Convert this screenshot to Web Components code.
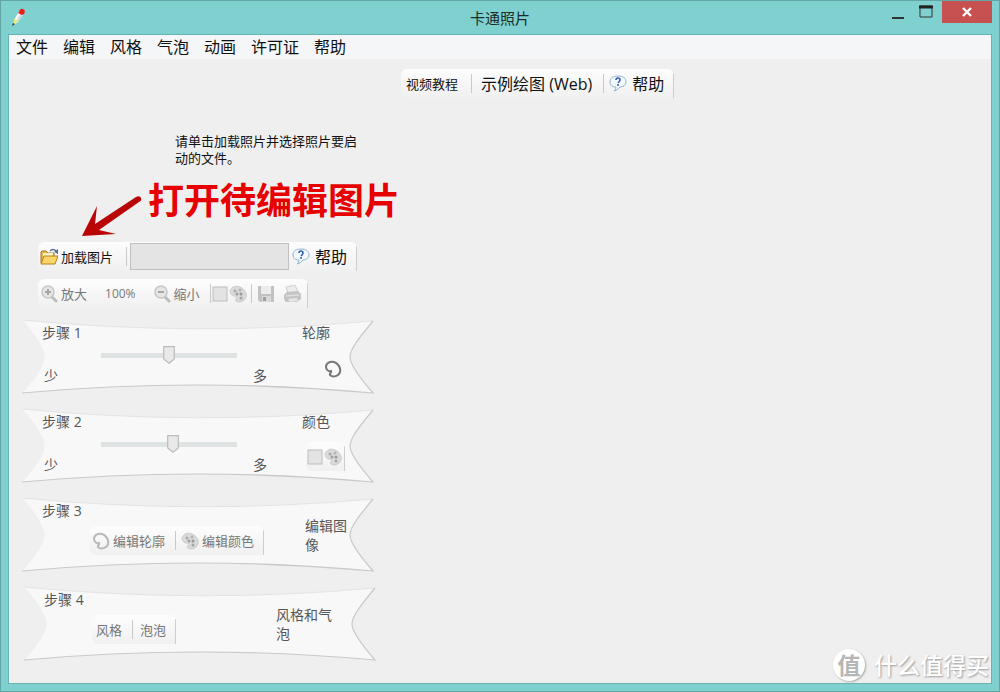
<!DOCTYPE html>
<html lang="zh-CN">
<head>
<meta charset="utf-8">
<title>卡通照片</title>
<style>
html, body { margin: 0; height: 100%; }
body { font-family: "Open Sans", "Noto Sans CJK SC", sans-serif; font-size: 14px; line-height: 18px; color: #111; background: #7fd1d0; }
</style>
</head>
<body>
<app-window></app-window>
<script>
function define(name, html, setup) {
  const template = document.createElement('template');
  template.innerHTML = html;
  customElements.define(name, class extends HTMLElement {
    constructor() {
      super();
      this.attachShadow({ mode: 'open' }).append(template.content.cloneNode(true));
    }
    connectedCallback() {
      if (setup && !this.ready) { this.ready = true; setup(this, this.shadowRoot); }
    }
  });
}

const icons = {
  pencil: '<path d="M2 17 L3 12 L9 2 L13 5 L7 14Z" fill="#f7f7f5"/><path d="M11 2 L13 5 L7 14 L5 14Z" fill="#d4d8dc"/><path d="M8 4 Q9 0 12 1 Q15 2 13 6 L11 7 L7 5Z" fill="#ee1c1c"/><path d="M3 11 L7 13 L3 16Z" fill="#e3ee6a"/><path d="M1 18 L2 15 L4 16Z" fill="#333"/>',
  help: '<path d="M9 1 C4 1 1 3 1 7 C1 10 3 12 7 12 Q7 15 5 16 Q9 15 11 12 C14 12 17 10 17 7 C17 3 14 1 9 1Z" fill="#f3f9fe" stroke="#8db2ca"/><path d="M7 5 Q7 3 9 3 Q11 3 11 5 Q11 6 9 8" fill="none" stroke="#315eae" stroke-width="1.6"/><circle cx="9" cy="10" r="1" fill="#315eae"/>',
  folder: '<path d="M1 15 L1 4 L2 3 L6 3 L8 5 L14 5 L14 15Z" fill="#e9b64a" stroke="#a9751d"/><path d="M3 5 L13 5 L13 8 L3 8Z" fill="#fff3c9"/><path d="M1 16 L4 8 L18 8 L15 16Z" fill="#fbd568" stroke="#b5801f"/><path d="M10 3 Q13 0 16 3" fill="none" stroke="#54708e" stroke-width="1.5"/><path d="M14 4 L18 1 L18 6Z" fill="#54708e"/>',
  zoomin: '<path d="M12 12 L16 16" stroke="#bcbcbc" stroke-width="3" stroke-linecap="round"/><circle cx="8" cy="7" r="6" fill="#e6e6e6" stroke="#c6c6c6" stroke-width="1.5"/><path d="M5 7H11M8 4V10" stroke="#a6a6a6" stroke-width="2"/>',
  zoomout: '<path d="M12 12 L16 16" stroke="#bcbcbc" stroke-width="3" stroke-linecap="round"/><circle cx="8" cy="7" r="6" fill="#e6e6e6" stroke="#c6c6c6" stroke-width="1.5"/><path d="M5 7H11" stroke="#a6a6a6" stroke-width="2"/>',
  swatch: '<rect x="2" y="2" width="14" height="14" fill="#e3e3e3" stroke="#bdbdbd"/>',
  palette: '<path d="M7 11 C4 12 1 9 1 6 C2 2 7 0 11 2 C16 4 18 9 17 12 C15 17 10 18 7 16 C5 14 9 13 7 11Z" fill="#dadada" stroke="#cacaca"/><circle cx="6" cy="6" r="1.5" fill="#aaa"/><circle cx="11" cy="5" r="1.5" fill="#b4b4b4"/><circle cx="8" cy="9" r="1.5" fill="#a0a0a0"/><circle cx="12" cy="9" r="1.5" fill="#999"/><circle cx="12" cy="13" r="1.5" fill="#a5a5a5"/>',
  save: '<path d="M1 1H17V17H3L1 15Z" fill="#c2c2c2"/><rect x="4" y="1" width="10" height="8" fill="#ececec"/><rect x="5" y="11" width="9" height="6" fill="#d9d9d9"/><rect x="6" y="12" width="3" height="4" fill="#a0a0a0"/>',
  print: '<path d="M5 8 L3 2 L12 0 L15 7Z" fill="#ececec" stroke="#cecece"/><path d="M1 10 L4 7 L15 6 L18 9 L18 14 L14 17 L3 17 L1 14Z" fill="#c4c4c4"/><path d="M3 11 L16 10" stroke="#dedede" stroke-width="1.5"/><path d="M5 14 L14 13 L15 16 L7 17Z" fill="#e6e6e6"/>',
  outline: '<path d="M7 11 C4 12 2 9 2 7 C2 3 6 1 10 2 C14 3 17 8 16 12 C15 16 9 18 6 15 C5 13 8 13 7 11Z" fill="none" stroke="currentColor" stroke-width="2"/>',
  minimize: '<path d="M3 15H15" stroke="#333" stroke-width="2"/>',
  maximize: '<path d="M3 3H15V14H3Z" fill="none" stroke="#333"/><path d="M2 4H16" stroke="#222" stroke-width="3"/>',
  close: '<path d="M5 5L13 13M13 5L5 13" stroke="#fff" stroke-width="2.4"/>'
};

define('app-icon', `
<style>
:host { display: block; flex: none; width: 18px; height: 18px; }
svg { display: block; width: 100%; height: 100%; }
</style>
<svg viewBox="0 0 18 18" aria-hidden="true"></svg>`, (host, root) => {
  root.querySelector('svg').innerHTML = icons[host.getAttribute('name')];
});

define('tool-button', `
<style>
:host { display: block; flex: none; }
button { display: flex; align-items: center; gap: 3px; width: 100%; height: 100%; margin: 0; padding: 0; border: 0; background: none; font: inherit; color: inherit; white-space: nowrap; }
</style>
<button type="button"><slot name="icon"></slot><slot></slot></button>`, (host, root) => {
  const button = root.querySelector('button');
  button.disabled = host.hasAttribute('disabled');
  if (host.hasAttribute('label')) button.setAttribute('aria-label', host.getAttribute('label'));
});

define('tool-strip', `
<style>
:host { display: flex; align-items: center; width: max-content; height: 29px; box-sizing: border-box; font-size: 13px; border-radius: 6px 6px 0 6px;
  background: linear-gradient(#cecece, #cecece) right 4px / 1px 100% no-repeat, linear-gradient(#fdfdfd, #f0f0f0); }
</style>
<slot></slot>`);

define('tool-divider', `
<style>
:host { display: block; flex: none; width: 1px; height: 19px; background: #c9c9c9; }
</style>`);

define('title-bar', `
<style>
:host { display: grid; grid-template-columns: 1fr auto 1fr; height: 33px; }
app-icon { margin: 7px 0 0 3px; }
h1 { margin: 0; font-size: 15px; font-weight: 400; line-height: 34px; color: #1b2c2c; }
.controls { display: flex; justify-content: flex-end; align-items: start; }
button { display: grid; place-items: center; width: 28px; height: 22px; padding: 0; border: 0; background: none; }
button app-icon { margin: 0; }
.close { width: 50px; margin-left: 2px; background: #c75050; }
</style>
<app-icon name="pencil"></app-icon>
<h1>卡通照片</h1>
<div class="controls">
  <button type="button" aria-label="最小化"><app-icon name="minimize"></app-icon></button>
  <button type="button" aria-label="最大化"><app-icon name="maximize"></app-icon></button>
  <button type="button" class="close" aria-label="关闭"><app-icon name="close"></app-icon></button>
</div>`);

define('menu-bar', `
<style>
:host { display: flex; gap: 15px; height: 24px; padding: 0 7px; background: #f4f6f8; }
button { padding: 0; border: 0; background: none; font: inherit; font-size: 16px; line-height: 24px; color: #111; }
</style>
<button type="button">文件</button><button type="button">编辑</button><button type="button">风格</button><button type="button">气泡</button><button type="button">动画</button><button type="button">许可证</button><button type="button">帮助</button>`);

define('amount-slider', `
<style>
:host { display: block; }
input { display: block; appearance: none; width: 100%; height: 18px; margin: 0; background: linear-gradient(#dfe3e3, #dfe3e3) center / 100% 5px no-repeat; }
input::-webkit-slider-thumb { appearance: none; width: 12px; height: 18px; border: 0;
  background: url("data:image/svg+xml,%3Csvg xmlns='http://www.w3.org/2000/svg' width='12' height='18'%3E%3Cpath d='M.7.7H11.3V13L6 17.3L.7 13Z' fill='%23e9e9e9' stroke='%23bcbcbc' stroke-width='1.2'/%3E%3C/svg%3E") no-repeat; }
</style>
<input type="range" min="0" max="100" disabled>`);

define('step-panel', `
<style>
:host { display: grid; height: 74px; color: #565656; }
svg, .content { grid-area: 1 / 1; min-width: 0; }
svg { display: block; width: 100%; height: 74px; overflow: visible; }
.content { display: grid; grid-template-columns: 1fr auto; padding: 4px 24px 5px 20px; }
h2 { margin: 0; font-size: 14px; line-height: 18px; font-weight: 400; }
</style>
<svg viewBox="0 0 352 74" preserveAspectRatio="none" aria-hidden="true">
  <path d="M0 0 Q176 17 351 1 C337 18 328 29 328 37 C328 45 337 57 351 73 Q176 57 0 73 C14 57 22 45 22 37 C22 29 14 16 0 0Z" fill="#f8f8f8"/>
  <path d="M0 0 Q176 17 351 1" fill="none" stroke="#e4e4e4"/>
  <path d="M0 0 C14 16 22 29 22 37 C22 45 14 57 0 73" fill="none" stroke="#efefef"/>
  <path d="M351 1 C337 18 328 29 328 37 C328 45 337 57 351 73 Q176 57 0 73" fill="none" stroke="#c9c9c9" stroke-width="1.2"/>
</svg>
<div class="content">
  <div><h2><slot name="title"></slot></h2><slot></slot></div>
  <slot name="side"></slot>
</div>`);

define('slider-field', `
<style>
:host { display: block; }
amount-slider { width: 136px; margin: 4px 0 0 59px; }
.ends { display: flex; justify-content: space-between; width: 223px; margin: 3px 0 0 2px; }
</style>
<amount-slider></amount-slider>
<div class="ends"><span>少</span><span>多</span></div>`, (host, root) => {
  const slider = root.querySelector('amount-slider').shadowRoot.querySelector('input');
  slider.value = host.getAttribute('value');
  slider.setAttribute('aria-label', host.getAttribute('label'));
});

define('load-hint', `
<style>
:host { display: block; }
p { width: 190px; margin: 0 0 0 166px; font-size: 13px; line-height: 17px; }
.note { display: flex; align-items: center; gap: 6px; height: 56px; margin: 15px 0 0 73px; font-size: 36px; line-height: 36px; font-weight: 700; color: #e60000; white-space: nowrap; }
svg { flex: none; margin-top: 14px; }
strong { margin-bottom: 18px; font-weight: 700; }
</style>
<p>请单击加载照片并选择照片要启动的文件。</p>
<div class="note">
  <svg width="60" height="42" viewBox="0 0 60 42" aria-hidden="true"><path d="M0 40 L15 10 L13 28 L54 1 Q58 -1 59 2 Q60 5 57 6 L17 34 L34 38Z" fill="#b90505"/></svg>
  <strong>打开待编辑图片</strong>
</div>`);

define('file-tools', `
<style>
:host { display: block; }
input { box-sizing: border-box; width: 159px; height: 27px; margin: 0 3px; border: 1px solid #c0c0c0; background: #e4e4e4; }
.load { padding: 0 13px 0 2px; }
.help { --gap: 5px; padding-right: 10px; font-size: 16px; }
.help span { padding-left: 2px; }
</style>
<tool-strip>
  <tool-button class="load"><app-icon slot="icon" name="folder"></app-icon>加载图片</tool-button>
  <tool-divider></tool-divider>
  <input type="text" aria-label="图片路径" disabled>
  <tool-button class="help"><app-icon slot="icon" name="help"></app-icon><span>帮助</span></tool-button>
</tool-strip>`);

define('view-tools', `
<style>
:host { display: block; color: #777; }
tool-button { padding-right: 18px; }
.in { padding-left: 2px; }
.level { margin-right: 17px; font-size: 12px; }
.out { padding-right: 10px; }
.icon { padding-right: 0; }
.color { padding-right: 4px; }
.save { padding: 0 8px 0 5px; }
.print { padding-right: 7px; }
</style>
<tool-strip>
  <tool-button class="in" disabled><app-icon slot="icon" name="zoomin"></app-icon>放大</tool-button>
  <span class="level">100%</span>
  <tool-button class="out" disabled><app-icon slot="icon" name="zoomout"></app-icon>缩小</tool-button>
  <tool-divider></tool-divider>
  <tool-button class="icon" label="颜色" disabled><app-icon slot="icon" name="swatch"></app-icon></tool-button>
  <tool-button class="color" label="调色板" disabled><app-icon slot="icon" name="palette"></app-icon></tool-button>
  <tool-divider></tool-divider>
  <tool-button class="save" label="保存" disabled><app-icon slot="icon" name="save"></app-icon></tool-button>
  <tool-button class="print" label="打印" disabled><app-icon slot="icon" name="print"></app-icon></tool-button>
</tool-strip>`);

define('step-list', `
<style>
:host { display: grid; gap: 15px; color: #565656; }
.side { width: 48px; }
.outline { width: 18px; margin: 18px 0 0 22px; color: #777; }
.color { margin: 11px 0 0 4px; }
.color tool-button:last-of-type { padding-right: 3px; }
.tools { margin: 6px 0 0 48px; color: #777; }
.tools tool-button { padding: 0 10px 0 2px; }
.tools tool-divider { margin-right: 3px; }
.plain tool-button { padding: 0 10px 0 4px; }
.edit { width: 45px; padding-top: 14px; line-height: 19px; }
.style { width: 60px; margin-right: 16px; padding-top: 14px; line-height: 19px; }
.muted { color: #b8b8b8; }
.last { margin: 0 -2px 0 2px; }
</style>
<step-panel>
  <span slot="title">步骤 1</span>
  <slider-field label="轮廓" value="50"></slider-field>
  <div slot="side" class="side">轮廓<tool-button class="outline" label="编辑轮廓" disabled><app-icon slot="icon" name="outline"></app-icon></tool-button></div>
</step-panel>
<step-panel>
  <span slot="title">步骤 2</span>
  <slider-field label="颜色" value="53"></slider-field>
  <div slot="side" class="side">颜色<tool-strip class="color"><tool-button label="颜色" disabled><app-icon slot="icon" name="swatch"></app-icon></tool-button><tool-button label="调色板" disabled><app-icon slot="icon" name="palette"></app-icon></tool-button></tool-strip></div>
</step-panel>
<step-panel>
  <span slot="title">步骤 3</span>
  <tool-strip class="tools">
    <tool-button disabled><app-icon class="muted" slot="icon" name="outline"></app-icon>编辑轮廓</tool-button>
    <tool-divider></tool-divider>
    <tool-button disabled><app-icon slot="icon" name="palette"></app-icon>编辑颜色</tool-button>
  </tool-strip>
  <div slot="side" class="edit">编辑图像</div>
</step-panel>
<step-panel class="last">
  <span slot="title">步骤 4</span>
  <tool-strip class="tools plain">
    <tool-button disabled>风格</tool-button>
    <tool-divider></tool-divider>
    <tool-button disabled>泡泡</tool-button>
  </tool-strip>
  <div slot="side" class="style">风格和气泡</div>
</step-panel>`);

define('help-tools', `
<style>
:host { display: block; }
.guide { padding: 0 13px 0 5px; }
.demo { padding: 0 11px 0 9px; font-size: 16px; }
.help { padding: 0 10px 0 5px; font-size: 16px; }
.help span { padding-left: 2px; }
</style>
<tool-strip>
  <tool-button class="guide">视频教程</tool-button>
  <tool-divider></tool-divider>
  <tool-button class="demo">示例绘图 (Web)</tool-button>
  <tool-divider></tool-divider>
  <tool-button class="help"><app-icon slot="icon" name="help"></app-icon><span>帮助</span></tool-button>
</tool-strip>`);

define('site-mark', `
<style>
:host { display: flex; align-items: center; gap: 9px; font-size: 23px; line-height: 32px; font-weight: 500; color: #fff; text-shadow: 1px 1px 2px #999; }
b { width: 32px; height: 32px; border-radius: 50%; background: #fff; box-shadow: 1px 1px 2px #aaa; color: #b5b5b5; font-weight: 700; text-align: center; text-shadow: none; }
</style>
<b>值</b><span>什么值得买</span>`);

define('app-window', `
<style>
:host { display: flex; flex-direction: column; position: relative; box-sizing: border-box; min-height: 100vh; padding: 0 7px 7px; border: 1px solid #64a5a5; background: #7fd1d0; }
.client { flex: 1; border: 1px solid #69b4b3; background: #efefef; }
main { display: grid; grid-template-columns: 392px minmax(0, 1fr); }
help-tools { margin-top: 10px; }
load-hint { margin-top: 74px; }
file-tools, view-tools { margin-left: 29px; }
file-tools { margin-top: 4px; }
view-tools { margin-top: 8px; }
step-list { margin: 12px 27px 0 13px; }
site-mark { position: absolute; right: 10px; bottom: 10px; }
</style>
<title-bar></title-bar>
<div class="client">
  <menu-bar></menu-bar>
  <main>
    <section aria-label="编辑步骤">
      <load-hint></load-hint>
      <file-tools></file-tools>
      <view-tools></view-tools>
      <step-list></step-list>
    </section>
    <section aria-label="预览"><help-tools></help-tools></section>
  </main>
</div>
<site-mark></site-mark>`);
</script>
</body>
</html>
